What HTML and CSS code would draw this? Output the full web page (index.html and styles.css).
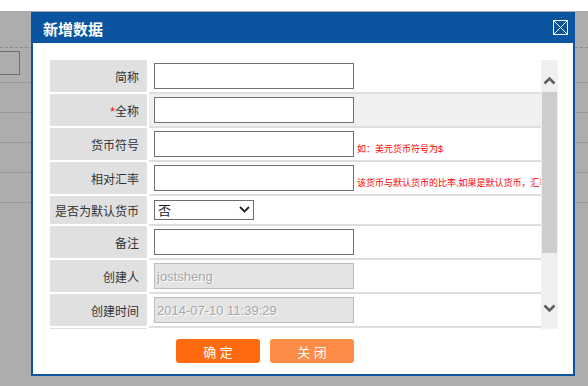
FILE: index.html
```html
<!DOCTYPE html>
<html lang="zh-CN">
<head>
    <meta charset="UTF-8">
    <title>新增数据</title>
    <link rel="stylesheet" href="styles.css">
</head>
<body>

<div class="backdrop">
    <div class="bd-top"></div>
    <div class="bd-toolbar"></div>
    <div class="bd-search"><span class="bd-input"></span></div>
    <div class="bd-row"></div>
    <div class="bd-row"></div>
    <div class="bd-row"></div>
    <div class="bd-row"></div>
</div>

<div class="dialog">
    <div class="dialog-title">
        <span>新增数据</span>
        <span class="dialog-close">
            <svg width="15" height="15" viewBox="0 0 15 15">
                <rect x="0.5" y="0.5" width="14" height="14" fill="none" stroke="#fff"/>
                <path d="M1 1 L14 14 M14 1 L1 14" stroke="#fff" stroke-width="1"/>
            </svg>
        </span>
    </div>
    <div class="dialog-body">
        <div class="form-scroll">
            <div class="form-clip">
                <table class="form-table">
                    <colgroup><col class="c-label"><col class="c-field"></colgroup>
                    <tr>
                        <td class="label">简称</td>
                        <td class="field"><input type="text" class="txt"></td>
                    </tr>
                    <tr class="hover">
                        <td class="label"><span class="req">*</span>全称</td>
                        <td class="field"><input type="text" class="txt"></td>
                    </tr>
                    <tr>
                        <td class="label">货币符号</td>
                        <td class="field"><div class="field-line"><input type="text" class="txt"><span class="hint">如：美元货币符号为$</span></div></td>
                    </tr>
                    <tr>
                        <td class="label">相对汇率</td>
                        <td class="field"><div class="field-line"><input type="text" class="txt"><span class="hint">该货币与默认货币的比率,如果是默认货币，汇率为1</span></div></td>
                    </tr>
                    <tr class="short">
                        <td class="label">是否为默认货币</td>
                        <td class="field">
                            <span class="sel-wrap">
                                <select class="sel">
                                    <option>否</option>
                                    <option>是</option>
                                </select>
                                <svg class="sel-arrow" width="11" height="7" viewBox="0 0 11 7">
                                    <path d="M1 1 L5.5 5.5 L10 1" fill="none" stroke="#222" stroke-width="1.8"/>
                                </svg>
                            </span>
                        </td>
                    </tr>
                    <tr>
                        <td class="label">备注</td>
                        <td class="field"><input type="text" class="txt"></td>
                    </tr>
                    <tr>
                        <td class="label">创建人</td>
                        <td class="field"><input type="text" class="txt" value="jostsheng" disabled></td>
                    </tr>
                    <tr>
                        <td class="label">创建时间</td>
                        <td class="field"><input type="text" class="txt" value="2014-07-10 11:39:29" disabled></td>
                    </tr>
                    <tr class="next">
                        <td class="label"></td>
                        <td class="field"></td>
                    </tr>
                </table>
            </div>
            <div class="scrollbar">
                <span class="sb-up">
                    <svg width="13" height="9" viewBox="0 0 13 9"><path d="M1.5 7.5 L6.5 2.5 L11.5 7.5" fill="none" stroke="#5f5f5f" stroke-width="2.6"/></svg>
                </span>
                <span class="sb-thumb"></span>
                <span class="sb-track"></span>
                <span class="sb-down">
                    <svg width="13" height="9" viewBox="0 0 13 9"><path d="M1.5 1.5 L6.5 6.5 L11.5 1.5" fill="none" stroke="#5f5f5f" stroke-width="2.6"/></svg>
                </span>
            </div>
        </div>
        <div class="dialog-buttons">
            <button class="btn btn-ok">确 定</button>
            <button class="btn btn-cancel">关 闭</button>
        </div>
    </div>
</div>

</body>
</html>
```

FILE: styles.css
```css
/* страница под диалогом */
body {
    margin: 0;
    font-family: 'Liberation Sans', 'Noto Sans CJK SC', sans-serif;
    font-size: 12px;
    color: #333;
    background-color: #adadad;
    height: 386px;
    overflow: hidden;
}
.backdrop {
    background-color: #adadad;
}
.bd-top {
    height: 11px;
    background-color: #fff;
}
.bd-toolbar {
    height: 36px;
    border-bottom: 1px dashed #8c8c8c;
}
.bd-search {
    height: 31px;
    border-bottom: 1px solid #9a9a9a;
}
.bd-input {
    display: block;
    margin: 3px 0 0 -40px;
    width: 60px;
    height: 24px;
    box-sizing: border-box;
    border: 1px solid #6e6e6e;
}
.bd-row {
    height: 29px;
    border-bottom: 1px solid #9a9a9a;
}
.bd-row:first-of-type {
    height: 30px;
}

/* диалог */
.dialog {
    position: absolute;
    left: 31px;
    top: 12px;
    width: 544px;
    height: 364px;
    box-sizing: border-box;
    padding: 0 2px 2px;
    background-color: #0b55a0;
    display: flex;
    flex-direction: column;
}
.dialog-title {
    height: 31px;
    display: flex;
    align-items: center;
    justify-content: space-between;
    padding: 2px 5px 0 10px;
    box-sizing: border-box;
    color: #fff;
    font-size: 15px;
    font-weight: bold;
}
.dialog-close {
    display: flex;
    width: 15px;
    height: 15px;
    margin-top: -2px;
    cursor: pointer;
}
.dialog-body {
    flex: 1;
    background-color: #fff;
    padding: 17px 15px 11px 17px;
}
.form-scroll {
    display: flex;
    height: 269px;
}
.form-clip {
    width: 491px;
    overflow: hidden;
}
.form-table {
    table-layout: fixed;
    width: 491px;
    border-collapse: separate;
    border-spacing: 0;
}
.c-label { width: 99px; }
.c-field { width: 392px; }
.form-table td {
    height: 32px;
    padding: 0;
    border-bottom: 2px solid #fff;
    white-space: nowrap;
    overflow: hidden;
}
.form-table td.label {
    background-color: #e0e0e0;
    border-right: 2px solid #fff;
    text-align: right;
    padding-right: 8px;
}
.form-table td.field {
    border-bottom-color: #dedede;
    padding-left: 5px;
}
.form-table tr.hover td.field {
    background-color: #f0f0f0;
}
.form-table tr.short td {
    height: 28px;
}
.req { color: #f00; }

.field-line {
    display: flex;
    align-items: flex-end;
}
.txt {
    display: block;
    flex-shrink: 0;
    width: 200px;
    height: 26px;
    box-sizing: border-box;
    border: 1px solid #707070;
    padding: 0 2px;
    margin: 0;
    font-family: 'Liberation Sans', 'Noto Sans CJK SC', sans-serif;
    font-size: 13px;
    color: #333;
    background-color: #fff;
    outline: none;
}
.txt:disabled {
    background-color: #e4e4e4;
    border-color: #bcbcbc;
    color: #a6a6a6;
    text-shadow: 1px 1px 0 #fff;
}
.hint {
    flex-shrink: 0;
    color: #f00;
    font-size: 9px;
    line-height: 11px;
    margin: 0 0 2px 3px;
}
.sel-wrap {
    position: relative;
    display: block;
    width: 100px;
    height: 20px;
}
.sel {
    appearance: none;
    -webkit-appearance: none;
    display: block;
    width: 100px;
    height: 20px;
    box-sizing: border-box;
    border: 1px solid #6e6e6e;
    border-radius: 0;
    background-color: #fff;
    padding: 0 0 0 3px;
    margin: 0;
    font-family: 'Liberation Sans', 'Noto Sans CJK SC', sans-serif;
    font-size: 13px;
    color: #222;
}
.sel-arrow {
    position: absolute;
    right: 4px;
    top: 6px;
    pointer-events: none;
}

/* полоса прокрутки */
.scrollbar {
    width: 17px;
    background-color: #f0f0f0;
    display: flex;
    flex-direction: column;
}
.sb-up {
    height: 32px;
    display: flex;
    justify-content: center;
    padding-top: 16px;
    box-sizing: border-box;
}
.sb-thumb {
    height: 161px;
    margin: 0 1px;
    background-color: #cdcdcd;
}
.sb-track { flex: 1; }
.sb-down {
    height: 34px;
    display: flex;
    justify-content: center;
    padding-top: 9px;
    box-sizing: border-box;
}

/* кнопки */
.dialog-buttons {
    display: flex;
    gap: 10px;
    margin-top: 10px;
    padding-left: 126px;
}
.btn {
    width: 84px;
    height: 24px;
    border: none;
    border-radius: 3px;
    color: #fff;
    font-family: 'Liberation Sans', 'Noto Sans CJK SC', sans-serif;
    font-size: 13px;
    padding: 0;
    cursor: pointer;
}
.btn-ok { background-color: #ff6a0f; }
.btn-cancel { background-color: #fd8d46; }
```
